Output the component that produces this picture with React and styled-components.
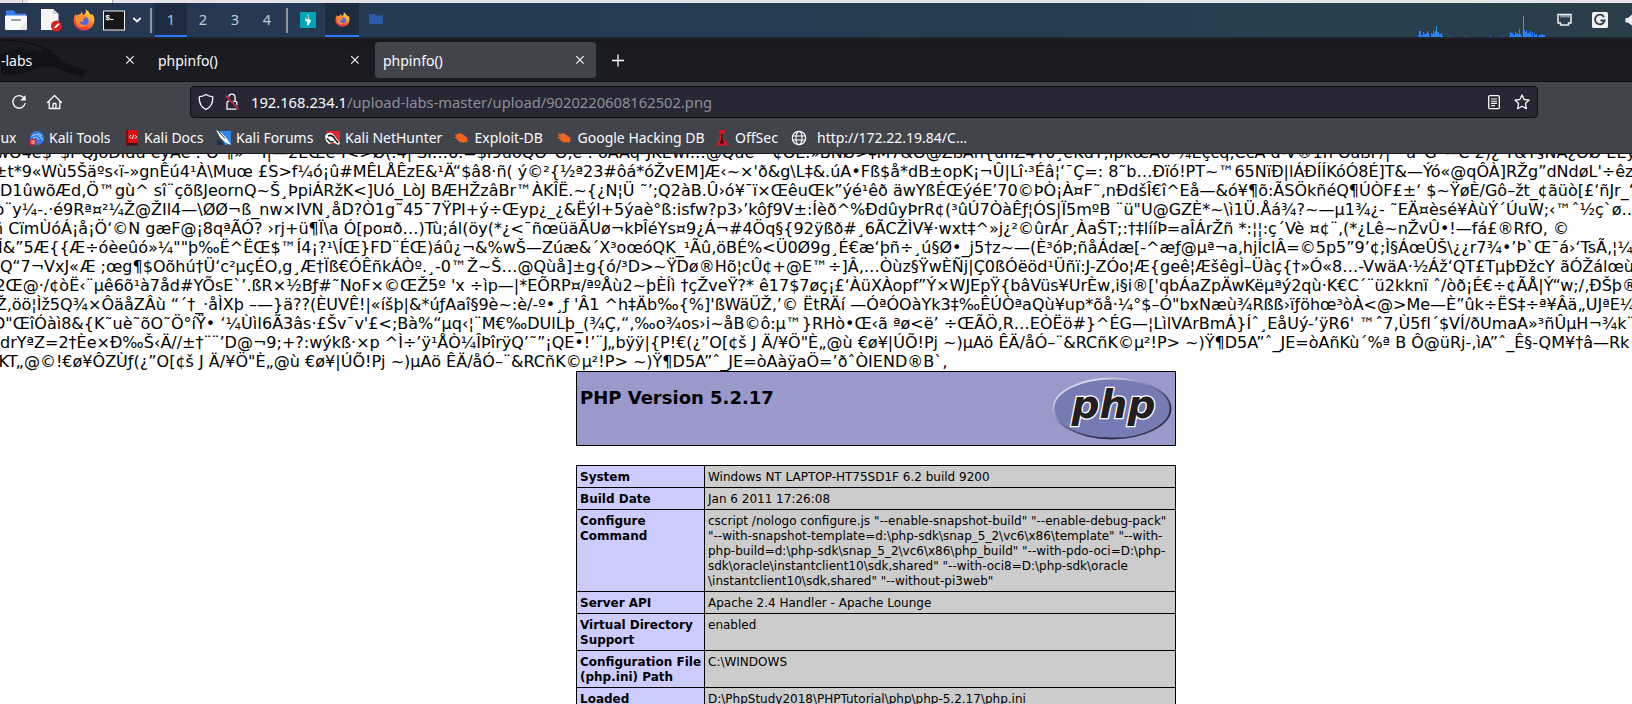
import React from "react";
import styled, { createGlobalStyle } from "styled-components";

const GlobalStyle = createGlobalStyle`
  * { box-sizing: border-box; }
  html, body { margin: 0; padding: 0; background: #fff; overflow: hidden; }
`;

const Screen = styled.div`
  width: 1632px;
  height: 704px;
  overflow: hidden;
  display: flex;
  flex-direction: column;
  background: #fff;
  font-family: "Noto Sans", sans-serif;
`;

/* host window edge */
const HostEdge = styled.div`
  height: 3px;
  flex: none;
  display: flex;
  background: #e2e4e8;
`;
const HostTab = styled.div`
  margin-left: 22px;
  width: 91px;
  border-left: 1px solid #aaa;
  border-right: 1px solid #aaa;
  background: linear-gradient(90deg, #e2e4e8 5px, #fff 5px);
`;

/* desktop panel */
const Panel = styled.div`
  height: 34px;
  flex: none;
  display: flex;
  align-items: center;
  background: linear-gradient(90deg, #273750 0, #263a52 400px, #263c50 800px, #293f4d 1380px, #2a3e4a 100%);
`;
const Launcher = styled.div`
  width: ${(p) => p.$w}px;
  height: 34px;
  flex: none;
  display: flex;
  align-items: center;
  justify-content: flex-start;
  svg { display: block; }
`;
const Divider = styled.div`
  width: 2px;
  height: 25px;
  flex: none;
  margin: 0 ${(p) => p.$right}px 0 ${(p) => p.$left || 0}px;
  background: #8f959e;
`;
const Workspace = styled.div`
  width: 32px;
  height: 34px;
  flex: none;
  text-align: center;
  font-size: 14.6px;
  line-height: 33px;
  color: ${(p) => (p.$active ? "#9fc0ea" : "#c3cbd6")};
  background: ${(p) => (p.$active ? "#1e2c40" : "transparent")};
  border-bottom: ${(p) => (p.$active ? "2px solid #2777ff" : "0")};
`;
const TaskButton = styled.div`
  width: 34px;
  height: 34px;
  flex: none;
  display: flex;
  align-items: center;
  justify-content: center;
  background: ${(p) => (p.$active ? "#1e2c40" : "transparent")};
  border-bottom: 2px solid ${(p) => (p.$active ? "#2777ff" : "transparent")};
`;
const Spacer = styled.div`
  flex: 1;
`;
const Graph = styled.svg`
  width: 127px;
  height: 34px;
  flex: none;
  margin-right: 12px;
`;

/* browser tabs */
const TabStrip = styled.div`
  height: 45px;
  flex: none;
  display: flex;
  padding-top: 3px;
  position: relative;
  border-top: 2px solid #202329;
  border-bottom: 1px solid #111217;
  background: linear-gradient(#17181c, #1b1c21 14px);
`;
const Watermark = styled.svg`
  position: absolute;
  left: 0;
  top: 0;
  width: 90px;
  height: 40px;
`;
const Tab = styled.div`
  position: relative;
  width: ${(p) => p.$w}px;
  height: 36px;
  margin-right: 4px;
  padding: 0 11px 0 8px;
  flex: none;
  display: flex;
  align-items: center;
  justify-content: space-between;
  border-radius: 4px;
  color: #fbfbfe;
  font-size: 14px;
  background: ${(p) => (p.$active ? "#42444c" : "transparent")};
`;
const TabTitle = styled.span`
  white-space: pre;
  line-height: 20px;
  margin-top: 2px;
  margin-left: ${(p) => p.$ml || 0}px;
`;
const NewTab = styled.div`
  width: 36px;
  height: 36px;
  display: flex;
  align-items: center;
  justify-content: center;
`;

/* navigation toolbar */
const NavBar = styled.div`
  height: 40px;
  flex: none;
  display: flex;
  align-items: center;
  padding: 0 94px 0 11px;
  background: #42444c;
`;
const NavButton = styled.div`
  width: ${(p) => p.$w}px;
  height: 20px;
  flex: none;
  svg { display: block; }
`;
const UrlField = styled.div`
  flex: 1;
  height: 32px;
  display: flex;
  align-items: center;
  padding: 0 7px 0 6px;
  border: 1px solid #0c0d14;
  border-radius: 4px;
  background: #272833;
  svg { display: block; flex: none; }
`;
const Url = styled.div`
  flex: 1;
  margin-left: 8px;
  font-size: 14.72px;
  line-height: 22px;
  white-space: pre;
  color: #8d8e97;
  span { color: #fbfbfe; }
`;

/* bookmarks */
const Bookmarks = styled.div`
  height: 32px;
  flex: none;
  display: flex;
  align-items: center;
  overflow: hidden;
  border-bottom: 1px solid #17181d;
  background: #42444c;
`;
const Bookmark = styled.div`
  width: ${(p) => p.$w}px;
  flex: none;
  display: flex;
  align-items: center;
  white-space: nowrap;
  color: #fbfbfe;
  font-size: 14px;
  line-height: 20px;
  svg { display: block; flex: none; margin-right: ${(p) => p.$gap ?? 4}px; }
`;
const CutLabel = styled.div`
  width: 16.5px;
  display: flex;
  justify-content: flex-end;
  overflow: hidden;
`;

/* web page */
const Page = styled.main`
  flex: 1;
  overflow: hidden;
  background: #fff;
  color: #000;
  font-family: "DejaVu Sans", sans-serif;
`;
const Dump = styled.div`
  margin-top: -11px;
  font-size: 16px;
  line-height: 19px;
`;
const DumpLine = styled.div`
  height: 19px;
  white-space: pre;
  font-variant-ligatures: none;
  margin-left: ${(p) => p.$x}px;
  letter-spacing: ${(p) => p.$ls}px;
`;
const Info = styled.div`
  width: 600px;
  margin: 0 0 0 576px;
  font-size: 12px;
  line-height: 15px;
`;
const InfoHeader = styled.div`
  height: 75px;
  display: flex;
  justify-content: space-between;
  padding: 3px 3px 0;
  border: 1px solid #000;
  background: #9999cc;
`;
const Title = styled.h1`
  margin: 12px 0 0;
  font-size: 18px;
  line-height: 22px;
`;
const InfoTable = styled.div`
  margin-top: 19px;
  border: 1px solid #000;
  border-bottom: 0;
`;
const Row = styled.div`
  display: grid;
  grid-template-columns: 128px 470px;
  border-bottom: 1px solid #000;
`;
const Key = styled.div`
  padding: 4px 3px 2px;
  font-weight: bold;
  white-space: pre;
  background: #ccccff;
  border-right: 1px solid #000;
`;
const Value = styled.div`
  padding: 4px 3px 2px;
  white-space: pre;
  background: #cccccc;
`;

const DUMP = [
  [-4, 0, "wO4e$ˉ$I-QJôDIdû eyAe : O ¶» ˉ I|—2EŒe-I<>Ø(.4| SI…6.=$I9uoQO¨O,e : öAAq-JKEwI…@Que ˉ ¢OE.»BNØ>‡M7&O@ZßAn{unZ4T0¸eKdT,IpkœA6-¼Eçcq,CcA d-V®1n OaßF/|¨¨a¨G¨-–C 2)¿ T&T§NA¿OØ EEy0C"],
  [-6, 0, "±t*9«Wù5Šäºs‹ï-»gnÊú4¹À\\Muœ £S>f¼ó¡û#MÊLÅÊzE&¹Ä“$â8·ñ( ý©²{½ª23#ôá*óŽvEM]Æ‹~×'ð&g\\L‡&.úA•Fß$å*dB±opK¡¬Û|Lî·³Éâ¦‘¯Ç=: 8˜b…Ðïó!PT~™65NïÐ|lÁÐÍÍKóÓ8É]T&—Ýó«@qÔÀ]RŽg”dNdøL'÷êz"],
  [0, 0, "D1ûwõÆd‚Ö™gù^ sî¨çõßJeornQ~Š¸ÞpiÁRžK<]Uó_LòJ BÆHŽzâBr™ÀKÎË.~{¿N¦Ü ˜’;Q2àB.Û›ó¥¯ï×ŒêuŒk”ýé¹êð äwYßÉŒýéE’70©ÞÒ¡À¤F˜‚nÐdšÎ€î^Eå—&ó¥¶õ:ÃSÖkñéQ¶ÚÒF£±‘ $~ŸøÈ/Gô–žt_¢ãüò[£‘ñJr_“"],
  [-5.5, 0, "ò¨y¼-.·é9Rª¤²¼Ž@ŽIl4—\\ØØ¬ß_nw×IVN¸åD?Ò1g˜45¯7ŸPI+ý÷Œyp¿_¿&ËýI+5ýaè°ß:isfw?p3›’kôƒ9V±:Íèð^%ÐdûyÞrR¢(³ûÚ7ÒàÊƒ¦ÓS|Ï5mºB ¨ü\"U@GZÈ*~\\ì1Ü.Åá¾?~—µ1¾¿- ˜EÄ¤èsé¥ÀùÝ´ÚuW;‹™ˆ½ç`ø…"],
  [-7, 0.004, "ñ CïmÙóÁ¡å¡Ö‘©N gæF@¡8qªÃÓ? ›rj+ü¶Ï\\a Ó[po¤ð…)Tù;ál(öy(*¿<¯ñœüäÃUø¬kÞÎéYs¤9¿Á¬#4Öq§{92ÿßð#¸6ÃCŽÌV¥·wxt‡^»j¿²©ûrÁr¸ÀaŠT;:†‡lííÞ=aÎÁrŽñ *:¦¦:ç´Vè ¤¢¨‚(*¿Lê~nŽvÛ•!—fá£®RfO, ©"],
  [-2, 0, "Í&”5Æ{{Æ÷óèeûó»¼\"\"þ‰Ë^ËŒ$™Í4¡?¹\\ÍŒ}FD¨ÉŒ)áû¿¬&%wŠ—Zúæ&´X³oœóQK_¹Ãû‚öBÉ%<Ü0Ø9g¸É€æ‘þñ÷¸ú§Ø•_j5†z~—(È³óÞ;ñåÁdæ[-^æƒ@µª¬a‚hjÍclÂ=©5p5”9’¢;Ì§ÁœÛŠ\\¿¿r7¾•’Þ`Œ¯á›‘TsÃ‚¦¼"],
  [0, 0, "Q“7¬VxJ«Æ ;œg¶$Oõhú†Ü‘c²µçÉO‚g¸Æ†Ïß€ÓÊñkÁÒº.¸-0™Ž~Š…@Qùå]±g{ó/³D>~ŸDø®Hõ¦cÛ¢+@E™÷]Â‚…Òùz§ŸwÈÑj|Ç0ßÓëöd¹Üñï:J-ZÓo¦Æ{geê¦ÆšêgÌ–Üàç{†»Ó«8…-VwäA·½Áž‘QT£TµþÐžcY ãÓŽálœù"],
  [-4.6, 0, "2Œ@·/¢òË‹¨µê6õ¹à7åd#YÕsE`’.ßR×½Bƒ#˜NoF×©ŒŽ5º 'x ÷ìp—|*EÕRP¤/ªºÅù2~þÈÍì †çŽveŸ?* ê17$7øç¡£‘ÀüXÀopf”Ý×WJEpŸ{bâVüs¥UrÈw‚i§i®['qbÁaZpÄwKëµªý2qù·K€C´¨ü2kknï ˆ/òð¡É€÷¢ÃÅ|Ý“w;/‚ÐŠþ®"],
  [-4.3, 0, "Ž‚öö¦Ìž5Q¾×ÔäåZÂù “´†_·åÌXþ –—}ä??(ÈUVÊ!|«íšþ|&*úƒAaî§9è~:è/-º•¸ƒ 'Â1 ^h‡Äb‰{%]'ßWäÜŽ‚’© ËtRÄí —ÓªÓOàYk3‡‰ÊÚÒªaQù¥up*õå·¼°$–Ó\"bxNæù¾Rßß›ïƒöhœ³òÀ<@>Me—È”ûk÷ËS‡÷ª¥Âä„UJªE¼"],
  [-7, 0.012, "D\"ŒîÓàì8&{K˜uè˜õO˜Ö°íŸ• ‘¼ÙìI6Ã3âs·£Šv¯v'£<;Bà%“µq‹¦¨M€‰DUlLþ_(¾Ç‚“‚‰o¾os›i~åB©ô:µ™}RHò•Œ‹ã ªø<ë’ ÷ŒÃÖ‚R…EÒËö#}^ÉG—¦LìlVArBmÁ}Íˆ¸EåUý-’ÿR6' ™ˆ7‚Ù5fI´$VÍ/ðUmaA»³ñÛµH¬¾k¨"],
  [0, 0, "drYªZ=2†Èe×Ð‰Š‹Ä//±†¨¨’D@¬9;+?:wýkß·×p ^Ì÷’ÿ¹ÅÒ¼ÎÞîrÿQ’˜”¡QE•!’¨J„bÿÿ|{P!€(¿”O[¢š J Ä/¥Ö\"È„@ù €ø¥|ÚÕ!Pj ~)µAö ÊÄ/åÓ–¨&RCñK©µ²!P> ~)Ÿ¶D5A”ˆ_JE=òAñKù´%ª B Ô@üRj-‚ìA”ˆ_Ê§-QM¥†â—Rk"],
  [-1.4, 0.012, "KT„@©!€ø¥ÔZÙƒ(¿”O[¢š J Ä/¥Ö\"È„@ù €ø¥|ÚÕ!Pj ~)µAö ÊÄ/åÓ–¨&RCñK©µ²!P> ~)Ÿ¶D5A”ˆ_JE=òAàÿaÖ=’ðˆÒIEND®B`‚"],
];

const ROWS = [
  ["System", "Windows NT LAPTOP-HT75SD1F 6.2 build 9200"],
  ["Build Date", "Jan 6 2011 17:26:08"],
  [
    "Configure\nCommand",
    'cscript /nologo configure.js "--enable-snapshot-build" "--enable-debug-pack"\n"--with-snapshot-template=d:\\php-sdk\\snap_5_2\\vc6\\x86\\template" "--with-\nphp-build=d:\\php-sdk\\snap_5_2\\vc6\\x86\\php_build" "--with-pdo-oci=D:\\php-\nsdk\\oracle\\instantclient10\\sdk,shared" "--with-oci8=D:\\php-sdk\\oracle\n\\instantclient10\\sdk,shared" "--without-pi3web"',
  ],
  ["Server API", "Apache 2.4 Handler - Apache Lounge"],
  ["Virtual Directory\nSupport", "enabled"],
  ["Configuration File\n(php.ini) Path", "C:\\WINDOWS"],
  ["Loaded", "D:\\PhpStudy2018\\PHPTutorial\\php\\php-5.2.17\\php.ini"],
];

/* [x, height] columns of the load monitor */
const LOAD = [
  [0, 2], [1, 6], [2, 6], [3, 2], [4, 2], [5, 5], [6, 3], [7, 3], [8, 4], [9, 6], [10, 4], [11, 1],
  [13, 4], [14, 3], [15, 6], [16, 4], [17, 6], [18, 11], [19, 5], [20, 5], [21, 3], [22, 3], [23, 4], [24, 1],
  [31, 1], [47, 1], [72, 1], [84, 1], [91, 1], [92, 5], [93, 4], [94, 4], [95, 2], [96, 2], [97, 5], [98, 3],
  [99, 4], [100, 3], [101, 8], [102, 3], [103, 1], [105, 21], [106, 7], [107, 5], [108, 7], [109, 4], [110, 4],
  [111, 4], [112, 6], [113, 2], [114, 5], [116, 4], [117, 2], [118, 3], [120, 1], [121, 2], [122, 2], [123, 2],
  [124, 3], [125, 2], [126, 2],
];

function Firefox({ size }) {
  return (
    <svg width={size} height={size} viewBox="0 0 22 22">
      <defs>
        <linearGradient id={`fx${size}`} x1="0.8" y1="0.05" x2="0.3" y2="1">
          <stop offset="0" stopColor="#ffe04a" />
          <stop offset="0.4" stopColor="#ff9a2b" />
          <stop offset="0.8" stopColor="#fb4438" />
          <stop offset="1" stopColor="#e8275f" />
        </linearGradient>
      </defs>
      <path
        d="M12.5 0.5c2.6 1.1 3.8 3 4.3 4.4 1 .2 1.700 1 2 1.600.1-1-.1-1.900-.1-1.900C21.200 7 21.600 9.500 21.300 12 20.600 17.500 16.300 21.500 11 21.500S.8 17.400.7 12C.6 9 1.500 6.500 3 4.500c0 1 .2 1.700.5 2.200.8-.8 2-1.300 3.300-1.300.8-.1 1.300-1.700 2.400-2.300-.1 1.100.2 2 1 2.700C12.500 6 13.500 3 12.500.5z"
        fill={`url(#fx${size})`}
      />
      <circle cx="11" cy="12.100" r="4.600" fill="#4468e6" />
      <path d="M3.500 6.700C5.500 5.200 8.500 5.600 10.400 7.300c1.800.1 2.500.5 2 1.400-.5 1-2.200 1-2.700 1.600-.4.600.2 1.400 1.800 1.300-1.200 1.700-4 1.500-5.100.2C7.200 15.500 10.500 17 13.500 15.500c-2 3.800-8.500 3.500-9.800-.5C2.600 12 2.600 9 3.500 6.700z" fill="#ff8a2a" />
    </svg>
  );
}

const Cross = () => (
  <svg width="10" height="10" viewBox="0 0 10 10">
    <path d="M1.200 1.200l7.400 7.400M8.600 1.200L1.200 8.600" stroke="#fbfbfe" strokeWidth="1.100" />
  </svg>
);

const Bug = () => (
  <svg width="16" height="16" viewBox="0 0 16 16">
    <path d="M1.500 3.500l3 1L5.500 3l2 .7 1-.5 1 1.300 2.500 1.200 1 1.500 2.200-.3-1.400 1.600 1.400 3-2-.8.8 2.300-2.600-.9-1.200.9-.8-.9-3.400.6L7.200 11.300 3.600 10.500l1.200-1L1 7.200l2.500-.4z" fill="#f0651f" />
  </svg>
);

function PhpLogo() {
  return (
    <svg width="120" height="67" viewBox="0 0 120 67">
      <defs>
        <linearGradient id="rim" x1="0.1" y1="0" x2="0.9" y2="1">
          <stop offset="0.15" stopColor="#d5d6ea" />
          <stop offset="0.45" stopColor="#7072a6" />
          <stop offset="0.75" stopColor="#26263a" />
          <stop offset="1" stopColor="#4a4b70" />
        </linearGradient>
      </defs>
      <ellipse cx="60" cy="33.500" rx="58.500" ry="30" fill="#777bb3" stroke="url(#rim)" strokeWidth="1.800" />
      <text
        x="19.500"
        y="43"
        textLength="84"
        lengthAdjust="spacingAndGlyphs"
        fontFamily="DejaVu Sans, sans-serif"
        fontWeight="bold"
        fontStyle="italic"
        fontSize="39"
        fill="#231f20"
        stroke="#fff"
        strokeWidth="2.600"
        paintOrder="stroke"
        strokeLinejoin="miter"
      >
        php
      </text>
    </svg>
  );
}

export default function App() {
  return (
    <>
      <GlobalStyle />
      <Screen>
        <HostEdge>
          <HostTab />
        </HostEdge>

        <Panel>
          <Launcher $w={40}>
            <svg width="28" height="22" viewBox="0 0 28 22">
              <path d="M6 1.500h8l2 3h10V14H6z" fill="#367bf0" />
              <rect x="5" y="6.500" width="22" height="14.500" rx="1" fill="#fafafa" />
              <path d="M18 21L27 11v9q0 1-1 1z" fill="#e8e8e8" />
              <rect x="11" y="10" width="10" height="2" rx="1" fill="#a0a0a0" />
            </svg>
          </Launcher>
          <Launcher $w={33}>
            <svg width="24" height="24" viewBox="0 0 24 24">
              <path d="M1 1h12l5.500 5v16H1z" fill="#f6f6f6" />
              <path d="M13 1l5.500 5H13z" fill="#d4d4d4" />
              <circle cx="16.500" cy="18" r="5.500" fill="#d8201f" />
              <path d="M14 20.500l.8-2 3.600-3.400 1.200 1.200-3.500 3.500z" fill="#fff" />
            </svg>
          </Launcher>
          <Launcher $w={30}>
            <Firefox size={22} />
          </Launcher>
          <Launcher $w={29}>
            <svg width="22" height="21" viewBox="0 0 22 21">
              <rect x="0.500" y="1" width="21" height="19" fill="#171717" stroke="#f2f2f2" strokeWidth="1" />
              <path d="M7 9.500h3.500" stroke="#fff" strokeWidth="1" />
              <text x="2.300" y="9.500" fontFamily="Liberation Mono, monospace" fontWeight="bold" fontSize="8" fill="#fff">$</text>
            </svg>
          </Launcher>
          <Launcher $w={18}>
            <svg width="10" height="8" viewBox="0 0 10 8">
              <path d="M1.300 2l3.700 3.500L8.700 2" fill="none" stroke="#f0f0f0" strokeWidth="1.800" />
            </svg>
          </Launcher>
          <Divider $right={3} />
          <Workspace $active>1</Workspace>
          <Workspace>2</Workspace>
          <Workspace>3</Workspace>
          <Workspace>4</Workspace>
          <Divider $left={3} $right={12} />
          <Launcher $w={25}>
            <svg width="16" height="16" viewBox="0 0 16 16">
              <rect width="16" height="16" fill="#00a3b8" />
              <path d="M8.500 2.500L5 6.500 8 7zM7.500 2.500h1.300v4.700L11.300 8 8.500 13.500H7.200V9.500L5 9z" fill="#fff" />
            </svg>
          </Launcher>
          <TaskButton $active>
            <Firefox size={15} />
          </TaskButton>
          <TaskButton>
            <svg width="16" height="12" viewBox="0 0 16 12">
              <path d="M1 1h6l1 1.500h7V11H1z" fill="#2c5aa6" />
            </svg>
          </TaskButton>
          <Spacer />
          <Graph viewBox="0 0 127 34">
            {LOAD.map(([x, h]) => (
              <rect key={x} x={x} y={34 - h} width="1" height={h} fill={h > 9 ? "#2a9bef" : "#2a7fff"} />
            ))}
          </Graph>
          <Launcher $w={35}>
            <svg width="15" height="14" viewBox="0.500 0 15 14">
              <path d="M1.500 1.500h13v8.500h-2.500v2H4v-2H1.500z" fill="none" stroke="#eee" strokeWidth="1.500" />
              <path d="M4.500 2v2.500M6.500 2v2.500M8.500 2v2.500M10.500 2v2.500M12.300 2v2.500" stroke="#eee" strokeWidth="0.900" />
            </svg>
          </Launcher>
          <Launcher $w={33}>
            <svg width="16" height="16" viewBox="0 0 16 16">
              <rect width="16" height="16" rx="1.500" fill="#f0f0f0" />
              <path d="M12 5A4.800 4.800 0 1 0 12.600 8.500H8.500" fill="none" stroke="#2a3e4a" strokeWidth="1.800" />
            </svg>
          </Launcher>
          <Launcher $w={7}>
            <svg width="7" height="12" viewBox="0 0 7 12">
              <path d="M0.500 4h2.500L7 0.500v11L3 8.500H0.500z" fill="#f0f0f0" />
            </svg>
          </Launcher>
        </Panel>

        <TabStrip>
          <Watermark viewBox="0 0 90 40">
            <path d="M0 1c18 0 38 4 52 12" fill="none" stroke="#0c0d10" strokeWidth="1.200" />
            <path
              d="M0 15c10-4 22-6 30-5l-13-2c3 3 5 4 8 5-2-1-3-2-4-4 5 3 9 4 12 4l-4-4c6 3 10 4 14 4l-2-3c8 2 12 4 20 10l6 3 2 3 18 5-5 8-2-2-12-3-9-4c-8-3-16-4-24 0-10 4-20 6-33 6z"
              fill="#111215"
            />
            <path d="M60 21l8 3-3-4 6 4" fill="none" stroke="#1d1e23" strokeWidth="0.800" />
          </Watermark>
          <Tab $w={146}>
            <TabTitle $ml={-7}>-labs</TabTitle>
            <Cross />
          </Tab>
          <Tab $w={221}>
            <TabTitle>phpinfo()</TabTitle>
            <Cross />
          </Tab>
          <Tab $w={221} $active>
            <TabTitle>phpinfo()</TabTitle>
            <Cross />
          </Tab>
          <NewTab>
            <svg width="14" height="14" viewBox="0 0 14 14">
              <path d="M7 1.500v12M1 7.500h12" stroke="#fbfbfe" strokeWidth="1.300" />
            </svg>
          </NewTab>
        </TabStrip>

        <NavBar>
          <NavButton $w={35}>
            <svg width="17" height="20" viewBox="0 0 17 20">
              <path d="M12.500 5.500A6.200 6.200 0 1 0 14.200 11" fill="none" stroke="#fbfbfe" strokeWidth="1.300" />
              <path d="M14.700 3v5.600H9.200z" fill="#fbfbfe" />
            </svg>
          </NavButton>
          <NavButton $w={144}>
            <svg width="18" height="20" viewBox="0 0 18 20">
              <path d="M1.500 10.500L8.500 3.500l7 7M3.200 9.500v7h10.600v-7M7 16.500v-4.300q0-.7.700-.7h1.600q.7 0 .7.700v4.300" fill="none" stroke="#fbfbfe" strokeWidth="1.300" strokeLinejoin="round" strokeLinecap="round" />
            </svg>
          </NavButton>
          <UrlField>
            <svg width="18" height="18" viewBox="0 0 18 18">
              <path d="M9 1.500c2 1.300 4 2 6.200 2.200.5 0 .6.400.6.700 0 5.500-1.800 9.800-6.800 12.100C4 14.200 2.200 9.900 2.200 4.400c0-.4.200-.7.600-.7C5 3.500 7 2.800 9 1.500z" fill="none" stroke="#fbfbfe" strokeWidth="1.300" />
            </svg>
            <svg width="28" height="18" viewBox="0 0 28 18">
              <path d="M13.500 8V4.500a3.300 3.300 0 0 1 6.600 0V8M12 16v-6.500q0-1.200 1.200-1.200h7.400q1.200 0 1.200 1.200V15q0 1.200-1.200 1.200H12z" fill="none" stroke="#fbfbfe" strokeWidth="1.300" />
              <path d="M10.500 2.500l13 13.500" stroke="#272833" strokeWidth="3" />
              <path d="M10.500 2.500l13 13.500" stroke="#e22850" strokeWidth="1.300" />
            </svg>
            <Url>
              <span>192.168.234.1</span>/upload-labs-master/upload/9020220608162502.png
            </Url>
            <svg width="26" height="16" viewBox="0 0 26 16">
              <rect x="0.700" y="1.700" width="10.600" height="13" rx="1.300" fill="none" stroke="#fbfbfe" strokeWidth="1.300" />
              <path d="M3 5h6M3 7.200h6M3 9.400h6M3 11.600h4" stroke="#fbfbfe" strokeWidth="1.100" />
            </svg>
            <svg width="16" height="16" viewBox="0 0 16 16">
              <path d="M8 .9l2.100 4.600 5 .6-3.700 3.400 1 5.200L8 12.300l-4.400 2.400 1-5.200L.9 6.100l5-.6z" fill="none" stroke="#fbfbfe" strokeWidth="1.300" strokeLinejoin="round" />
            </svg>
          </UrlField>
        </NavBar>

        <Bookmarks>
          <Bookmark $w={29}>
            <CutLabel>Kali Linux</CutLabel>
          </Bookmark>
          <Bookmark $w={96}>
            <svg width="16" height="16" viewBox="0 0 16 16">
              <circle cx="8" cy="8" r="7" fill="#2b7df0" />
              <path d="M2.500 6.500C6 3.500 9.500 4 11 7l3 2.500M4 8c3-1.500 5-.5 6 2M9 3.500l4 2.500" fill="none" stroke="#b9d8ff" strokeWidth="1" />
              <circle cx="4" cy="12" r="3.600" fill="#e0222c" />
              <path d="M2.300 11h3.400M3.100 11v3M4.900 11v3" stroke="#fff" strokeWidth="0.700" />
            </svg>
            Kali Tools
          </Bookmark>
          <Bookmark $w={91} $gap={3}>
            <svg width="16" height="16" viewBox="0 0 16 16">
              <path d="M1 0h2v16H1z" fill="#7d0d12" />
              <path d="M3 0h10v13H3z" fill="#e00d12" />
              <path d="M2 13h11v2.500H2z" fill="#3c1417" />
              <path d="M6 5L4.300 6.800 6 8.600M10 5l1.700 1.800L10 8.600M8.600 4.500L7.400 9" fill="none" stroke="#fff" strokeWidth="1" />
            </svg>
            Kali Docs
          </Bookmark>
          <Bookmark $w={109}>
            <svg width="16" height="16" viewBox="0 0 16 16">
              <path d="M3 1h12v13l-6 1z" fill="#2b86ee" />
              <path d="M0 0l6 3.500L10.500 8l4.500 7-5.500-2.500L4.500 8z" fill="#fff" />
              <path d="M3 2l6 6.500" stroke="#141414" strokeWidth="0.900" />
              <path d="M1 9l3 1 4 5H1z" fill="#123058" />
            </svg>
            Kali Forums
          </Bookmark>
          <Bookmark $w={128}>
            <svg width="16" height="16" viewBox="0 0 16 16">
              <path d="M1 1h14v13H5z" fill="#e3232d" />
              <path d="M0 6c2.500-4 6.500-4 9-1l6 8-1.500 2-5-2.500L4 14 1 11z" fill="#fff" />
              <path d="M3 6c3-1.500 5.500.5 7 3l3 4M2 8.500l3.500 3.500 3-.5" fill="none" stroke="#171717" strokeWidth="1.600" />
            </svg>
            Kali NetHunter
          </Bookmark>
          <Bookmark $w={103} $gap={5.5}>
            <Bug />
            Exploit-DB
          </Bookmark>
          <Bookmark $w={159} $gap={5.5}>
            <Bug />
            Google Hacking DB
          </Bookmark>
          <Bookmark $w={76}>
            <svg width="16" height="16" viewBox="0 0 16 16">
              <path d="M4 0h6v3H9v6l4.500 6.500H1L5 9V3H4z" fill="#dc1620" />
              <path d="M6.300 4h1.500v5l1.200 4.500H5L6.300 9z" fill="#25080a" />
            </svg>
            OffSec
          </Bookmark>
          <Bookmark $gap={10} $w={180}>
            <svg width="16" height="16" viewBox="0 0 16 16">
              <circle cx="8" cy="8" r="6.700" fill="none" stroke="#fbfbfe" strokeWidth="1.200" />
              <ellipse cx="8" cy="8" rx="3" ry="6.700" fill="none" stroke="#fbfbfe" strokeWidth="1.200" />
              <path d="M1.500 6h13M1.500 10h13" stroke="#fbfbfe" strokeWidth="1.200" />
            </svg>
            http://172.22.19.84/C…
          </Bookmark>
        </Bookmarks>

        <Page>
          <Dump>
            {DUMP.map(([x, ls, text]) => (
              <DumpLine key={text} $x={x} $ls={ls}>
                {text}
              </DumpLine>
            ))}
          </Dump>
          <Info>
            <InfoHeader>
              <Title>PHP Version 5.2.17</Title>
              <PhpLogo />
            </InfoHeader>
            <InfoTable>
              {ROWS.map(([k, v]) => (
                <Row key={k}>
                  <Key>{k}</Key>
                  <Value>{v}</Value>
                </Row>
              ))}
            </InfoTable>
          </Info>
        </Page>
      </Screen>
    </>
  );
}
